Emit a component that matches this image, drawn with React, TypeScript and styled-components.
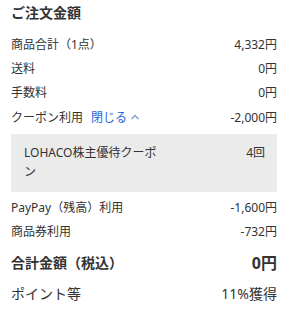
import React from "react";
import styled, { createGlobalStyle } from "styled-components";

const Global = createGlobalStyle`
  html, body {
    margin: 0;
    padding: 0;
    background: #ffffff;
  }
  body {
    font-family: "Noto Sans", "Noto Sans CJK JP", sans-serif;
    color: #333333;
  }
`;

const Panel = styled.section`
  width: 291px;
  box-sizing: border-box;
  padding: 2px 14px 0 11px;
  display: flex;
  flex-direction: column;
`;

const Title = styled.h2`
  margin: 0 0 8px;
  font-size: 14px;
  line-height: 22px;
  font-weight: 700;
  color: #333333;
`;

const Row = styled.div<{ $gap?: number }>`
  display: flex;
  justify-content: space-between;
  align-items: center;
  height: 24px;
  margin-top: ${(p) => p.$gap ?? 0}px;
  font-size: 12px;
`;

const Label = styled.span`
  display: flex;
  align-items: center;
  gap: 8px;
`;

const Amount = styled.span`
  white-space: nowrap;
`;

const Toggle = styled.button`
  display: inline-flex;
  align-items: center;
  gap: 3px;
  padding: 0;
  border: 0;
  background: none;
  font: inherit;
  font-size: 12px;
  color: #2c64cf;
  cursor: pointer;
`;

const CouponBox = styled.div`
  margin: 5px 0 3px;
  padding: 9px 12px 11px 13px;
  background: #ebebeb;
  display: flex;
  justify-content: space-between;
  align-items: flex-start;
  font-size: 12px;
  line-height: 19px;
`;

const CouponName = styled.span`
  width: 140px;
`;

const TotalRow = styled(Row)`
  font-size: 14px;
  font-weight: 700;
  height: 28px;
`;

const TotalAmount = styled.span`
  font-size: 16px;
  font-weight: 700;
`;

const PointRow = styled(Row)`
  font-size: 14px;
  height: 26px;
`;

export default function App() {
  return (
    <>
      <Global />
      <Panel>
        <Title>ご注文金額</Title>
        <Row>
          <span>商品合計（1点）</span>
          <Amount>4,332円</Amount>
        </Row>
        <Row>
          <span>送料</span>
          <Amount>0円</Amount>
        </Row>
        <Row>
          <span>手数料</span>
          <Amount>0円</Amount>
        </Row>
        <Row $gap={1}>
          <Label>
            クーポン利用
            <Toggle type="button">
              閉じる
              <svg width="10" height="10" viewBox="0 0 10 10" fill="none">
                <path d="M1.5 7 L5 3.5 L8.5 7" stroke="#7f9bd0" strokeWidth="1.3" />
              </svg>
            </Toggle>
          </Label>
          <Amount>-2,000円</Amount>
        </Row>
        <CouponBox>
          <CouponName>LOHACO株主優待クーポン</CouponName>
          <Amount>4回</Amount>
        </CouponBox>
        <Row>
          <span>PayPay（残高）利用</span>
          <Amount>-1,600円</Amount>
        </Row>
        <Row>
          <span>商品券利用</span>
          <Amount>-732円</Amount>
        </Row>
        <TotalRow $gap={5}>
          <span>合計金額（税込）</span>
          <TotalAmount>0円</TotalAmount>
        </TotalRow>
        <PointRow $gap={4}>
          <span>ポイント等</span>
          <Amount>11%獲得</Amount>
        </PointRow>
      </Panel>
    </>
  );
}
